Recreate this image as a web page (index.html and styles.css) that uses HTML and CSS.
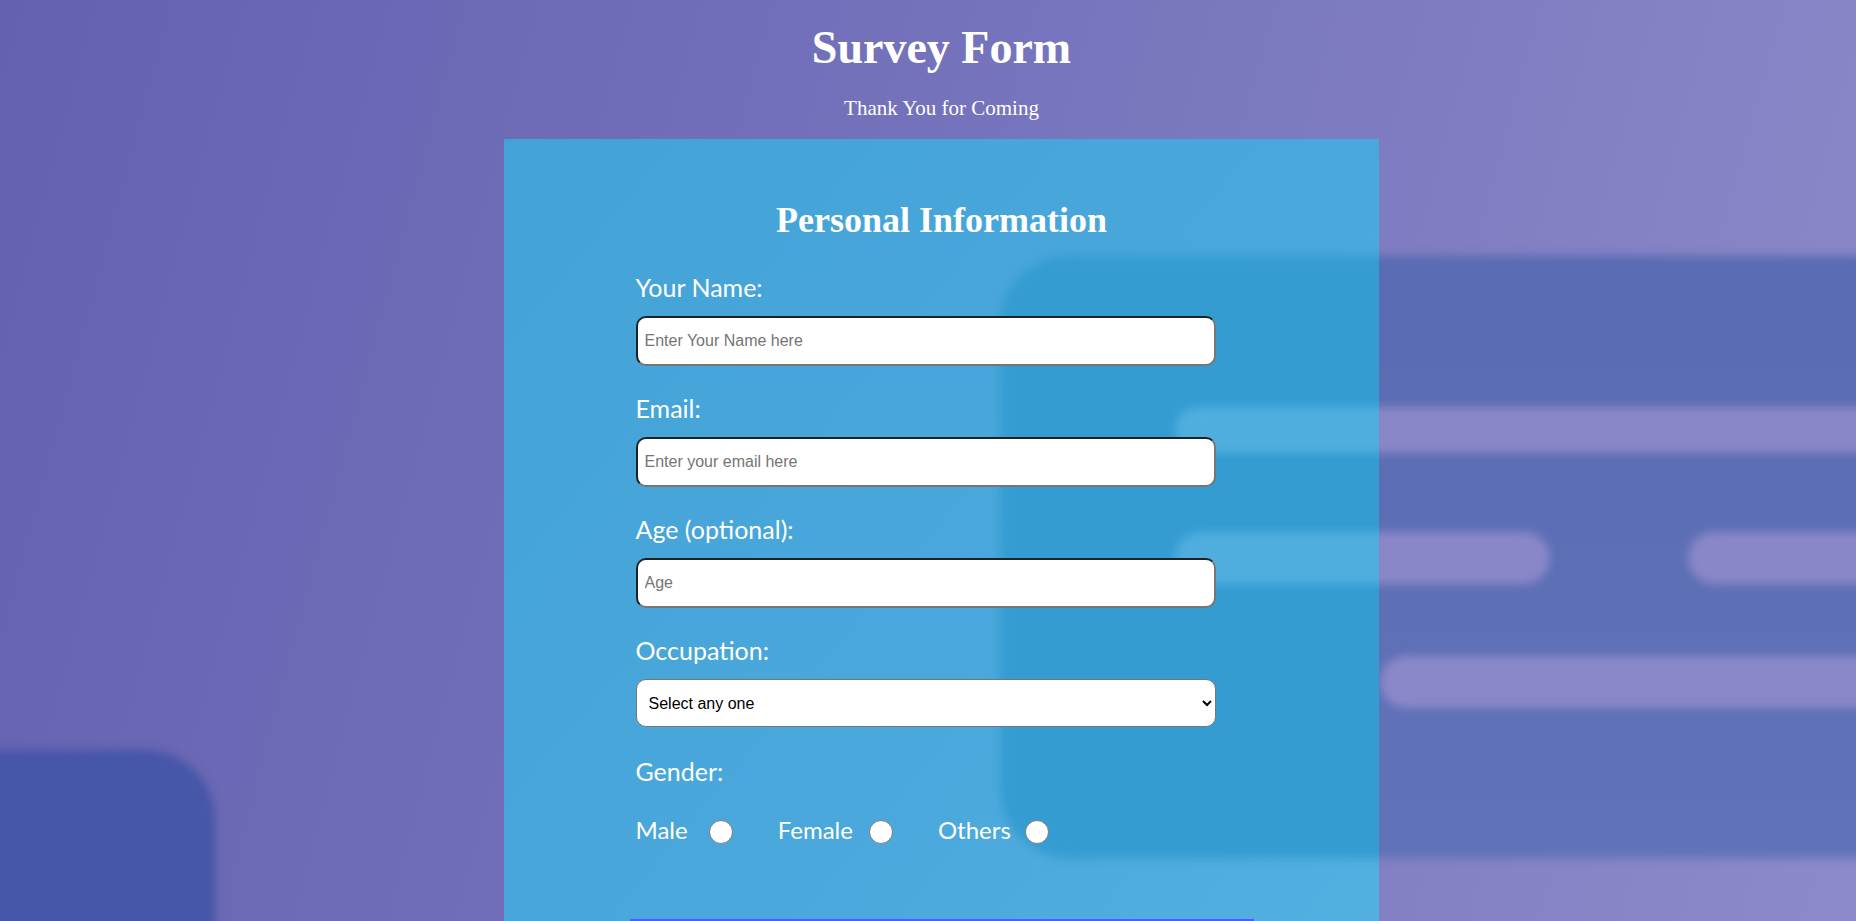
FILE: index.html
```html
<!DOCTYPE html>
<html lang="en">
<head>
<meta charset="utf-8">
<title>Survey Form</title>
<link rel="stylesheet" href="styles.css">
</head>
<body>
  <div class="backdrop" aria-hidden="true">
    <div class="blob blob-rect"></div>
    <div class="blob blob-bar bar-1"></div>
    <div class="blob blob-bar bar-2"></div>
    <div class="blob blob-bar bar-3"></div>
    <div class="blob blob-bar bar-4"></div>
    <div class="blob blob-corner"></div>
  </div>

  <main class="page">
    <header class="header">
      <h1 class="title">Survey Form</h1>
      <p class="subtitle">Thank You for Coming</p>
    </header>

    <section class="card">
      <div class="card-tint" aria-hidden="true">
        <div class="tint tint-rect"></div>
        <div class="tint tint-bar tint-bar-1"></div>
        <div class="tint tint-bar tint-bar-2"></div>
      </div>

      <form class="form">
        <h2 class="section-title">Personal Information</h2>

        <div class="field">
          <label class="label" for="name">Your Name:</label>
          <input class="input" id="name" type="text" placeholder="Enter Your Name here">
        </div>

        <div class="field">
          <label class="label" for="email">Email:</label>
          <input class="input" id="email" type="email" placeholder="Enter your email here">
        </div>

        <div class="field">
          <label class="label" for="age">Age (optional):</label>
          <input class="input" id="age" type="text" placeholder="Age">
        </div>

        <div class="field field-select">
          <label class="label" for="occupation">Occupation:</label>
          <select class="select" id="occupation">
            <option>Select any one</option>
            <option>Student</option>
            <option>Employed</option>
            <option>Other</option>
          </select>
        </div>

        <div class="field">
          <span class="label">Gender:</span>
          <div class="radios">
            <label class="radio-option option-male"><span class="radio-text">Male</span><input class="radio" type="radio" name="gender"></label>
            <label class="radio-option"><span class="radio-text">Female</span><input class="radio" type="radio" name="gender"></label>
            <label class="radio-option option-others"><span class="radio-text">Others</span><input class="radio" type="radio" name="gender"></label>
          </div>
        </div>

        <div class="divider"></div>
      </form>
    </section>
  </main>
</body>
</html>
```

FILE: styles.css
```css
html, body {
  margin: 0;
  padding: 0;
  height: 100%;
  overflow: hidden;
}

body {
  position: relative;
  background: linear-gradient(105deg, #6461b0 0%, #7472bb 45%, #8d8aca 100%);
  font-family: "Lato", "Open Sans", sans-serif;
  color: #ffffff;
}

/* blurred decorative background */
.backdrop {
  position: absolute;
  inset: 0;
  overflow: hidden;
  z-index: 0;
}

.blob {
  position: absolute;
  filter: blur(5px);
}

.blob-rect {
  left: 1000px;
  top: 256px;
  width: 1000px;
  height: 602px;
  border-radius: 70px;
  background: linear-gradient(to bottom, #596bb2, #6073b8);
}

.blob-bar {
  background: #8a87c8;
}

.bar-1 {
  left: 1175px;
  top: 407px;
  width: 900px;
  height: 46px;
  border-radius: 23px;
}

.bar-2 {
  left: 1175px;
  top: 532px;
  width: 375px;
  height: 52px;
  border-radius: 26px;
}

.bar-3 {
  left: 1688px;
  top: 532px;
  width: 400px;
  height: 52px;
  border-radius: 26px;
}

.bar-4 {
  left: 1380px;
  top: 656px;
  width: 700px;
  height: 52px;
  border-radius: 26px;
  background: #8b88c9;
}

.blob-corner {
  left: -120px;
  top: 750px;
  width: 335px;
  height: 400px;
  border-radius: 70px;
  background: #4656a8;
}

/* page */
.page {
  position: relative;
  z-index: 1;
  width: 875px;
  margin-left: calc(50% - 424px);
}

.header {
  padding-top: 22px;
  text-align: center;
}

.title {
  margin: 0;
  font-family: "Liberation Serif", "DejaVu Serif", serif;
  font-weight: 700;
  font-size: 46px;
  line-height: 52px;
}

.subtitle {
  margin: 22px 0 0;
  font-family: "Liberation Serif", "DejaVu Serif", serif;
  font-size: 21px;
  line-height: 24px;
}

.card {
  position: relative;
  overflow: hidden;
  margin-top: 19px;
  min-height: 820px;
  background: linear-gradient(130deg, #43a2d6 0%, #4aa8dc 60%, #53b0e1 100%);
}

.card-tint {
  position: absolute;
  inset: 0;
  z-index: 0;
}

.tint {
  position: absolute;
  filter: blur(5px);
}

.tint-rect {
  left: 496px;
  top: 117px;
  width: 600px;
  height: 602px;
  border-radius: 70px;
  background: #349cd1;
}

.tint-bar {
  background: #50aedf;
}

.tint-bar-1 {
  left: 671px;
  top: 268px;
  width: 400px;
  height: 46px;
  border-radius: 23px;
}

.tint-bar-2 {
  left: 671px;
  top: 393px;
  width: 400px;
  height: 52px;
  border-radius: 26px;
}

.form {
  position: relative;
  z-index: 1;
  width: 624px;
  margin: 0 auto;
  padding-top: 60px;
}

.section-title {
  margin: 0 0 32px;
  text-align: center;
  font-family: "Liberation Serif", "DejaVu Serif", serif;
  font-weight: 700;
  font-size: 36px;
  line-height: 42px;
}

.field {
  display: flex;
  flex-direction: column;
  align-items: flex-start;
  padding-left: 6px;
  margin-bottom: 28px;
}

.field-select {
  margin-bottom: 30px;
}

.label {
  display: block;
  font-size: 25px;
  line-height: 29px;
  margin-bottom: 14px;
}

.input {
  box-sizing: border-box;
  width: 580px;
  height: 50px;
  margin: 0;
  padding: 0 7px;
  border-width: 2px;
  border-style: inset;
  border-color: #767676;
  border-radius: 10px;
  background: #ffffff;
  font-family: "Liberation Sans", Arial, sans-serif;
  font-size: 16px;
  color: #000000;
}

.input::placeholder {
  color: #757575;
}

.select {
  box-sizing: border-box;
  width: 580px;
  height: 48px;
  margin: 0;
  padding: 0 8px;
  border: 1px solid #767676;
  border-radius: 10px;
  background-color: #ffffff;
  font-family: "Liberation Sans", Arial, sans-serif;
  font-size: 16px;
  color: #000000;
}

.radios {
  display: flex;
  align-items: center;
  margin-top: 15px;
}

.radio-option {
  display: flex;
  align-items: center;
  margin-right: 45px;
  font-size: 24px;
  line-height: 29px;
}

.radio {
  appearance: none;
  -webkit-appearance: none;
  box-sizing: border-box;
  width: 24px;
  height: 24px;
  margin: 4px 0 0 16px;
  border: 1.5px solid #7a7a7a;
  border-radius: 50%;
  background: #ffffff;
}

.option-male .radio {
  margin-left: 21px;
}

.option-others .radio {
  margin-left: 14px;
}

.divider {
  margin-top: 75px;
  border-top: 2px solid #4f5cff;
  height: 40px;
}
```
